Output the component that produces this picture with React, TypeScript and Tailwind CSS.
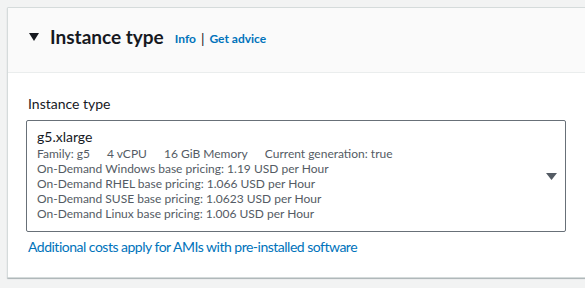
export default function App() {
  return (
    <div className="w-[585px] h-[288px] bg-[#f2f3f3] pt-[7px] pl-[7px] overflow-hidden" style={{ fontFamily: 'Lato, "Noto Sans", sans-serif' }}>
      <div className="w-[600px] bg-white border border-[#d5dbdb] shadow-[0_1px_1px_0_rgba(0,28,36,0.3)] rounded-[1px]">
        <div className="h-[65px] bg-[#fafafa] border-b border-[#eaeded] flex items-center pl-[21px] pb-[6px]">
          <svg width="10" height="8" viewBox="0 0 10 8" className="mr-[11px]">
            <polygon points="0,0 10,0 5,8" fill="#16191f" />
          </svg>
          <span className="text-[19px] font-bold text-[#16191f] leading-[24px]">Instance type</span>
          <span className="ml-[11px] text-[12px] font-bold text-[#0073bb] mt-[3px]">Info</span>
          <span className="mx-[5px] text-[14px] text-[#16191f] mt-[2px]">|</span>
          <span className="text-[12px] font-bold text-[#0073bb] mt-[3px]">Get advice</span>
        </div>
        <div className="pl-[20px] pt-[21px] h-[204px]">
          <div className="text-[14px] text-[#16191f] leading-[20px]">Instance type</div>
          <div className="mt-[6px] w-[540px] h-[112px] border border-[#687078] rounded-[2px] flex items-start pr-[8px] ml-[-2px]">
            <div className="flex-1 pl-[10px] pt-[6px]">
              <div className="text-[14px] text-[#16191f] leading-[19px]">g5.xlarge</div>
              <div className="text-[12px] text-[#545b64] leading-[15px]">
                <div className="flex">
                  <span>Family: g5</span>
                  <span className="ml-[17px]">4 vCPU</span>
                  <span className="ml-[17px]">16 GiB Memory</span>
                  <span className="ml-[17px]">Current generation: true</span>
                </div>
                <div>On-Demand Windows base pricing: 1.19 USD per Hour</div>
                <div>On-Demand RHEL base pricing: 1.066 USD per Hour</div>
                <div>On-Demand SUSE base pricing: 1.0623 USD per Hour</div>
                <div>On-Demand Linux base pricing: 1.006 USD per Hour</div>
              </div>
            </div>
            <svg width="11" height="7" viewBox="0 0 11 7" className="mt-[52px]">
              <polygon points="0,0 11,0 5.5,7" fill="#545b64" />
            </svg>
          </div>
          <div className="mt-[5px] text-[14px] tracking-[-0.5px] text-[#0073bb] leading-[20px]">Additional costs apply for AMIs with pre-installed software</div>
        </div>
      </div>
    </div>
  );
}
